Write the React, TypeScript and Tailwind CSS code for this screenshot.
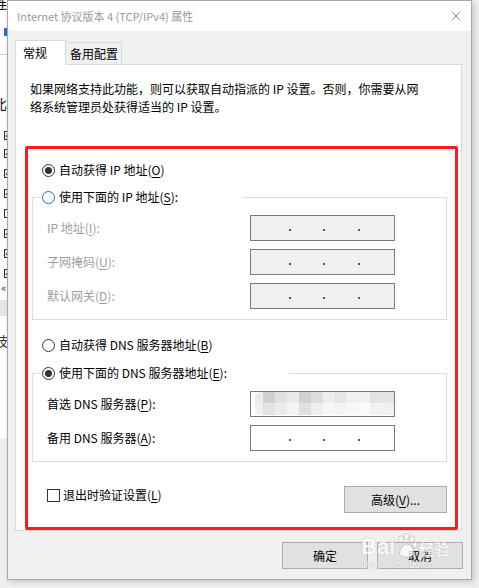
import React from "react";

const U = ({ children }: { children: React.ReactNode }) => (
  <span className="underline decoration-[1px] underline-offset-[2px]">{children}</span>
);

function Radio({ checked = false, focus = false }: { checked?: boolean; focus?: boolean }) {
  return (
    <span
      className={`flex h-[13px] w-[13px] shrink-0 items-center justify-center rounded-full border bg-white ${
        focus ? "border-[#0078d7]" : "border-[#333333]"
      }`}
    >
      {checked && <span className="h-[7px] w-[7px] rounded-full bg-[#333333]" />}
    </span>
  );
}

function Dots() {
  return (
    <div className="flex items-center pl-[38px] pt-[3px]">
      <span className="h-[2px] w-[2px] bg-[#55556a]" />
      <span className="ml-[32px] h-[2px] w-[2px] bg-[#55556a]" />
      <span className="ml-[33px] h-[2px] w-[2px] bg-[#55556a]" />
    </div>
  );
}

function IpBox({ disabled = false, children }: { disabled?: boolean; children?: React.ReactNode }) {
  return (
    <div
      className={`flex h-[26px] w-[145px] items-center overflow-hidden border border-[#7a7a7a] ${
        disabled ? "bg-[#f0f0f0]" : "bg-white"
      }`}
    >
      {children ?? <Dots />}
    </div>
  );
}

function Mosaic() {
  return (
    <div className="flex h-full w-full flex-col pl-[4px]">
      <div className="flex h-[11px]">
        <span className="w-[8px] rounded-tl-[6px] bg-[#ececec]" />
        <span className="w-[12px] bg-[#d0d0d0]" />
        <span className="w-[12px] bg-[#e0e0e0]" />
        <span className="w-[12px] bg-[#ece9e6]" />
        <span className="w-[12px] bg-[#d1d1d1]" />
        <span className="w-[12px] bg-[#dcdde0]" />
        <span className="w-[12px] bg-[#eeeeee]" />
        <span className="w-[12px] bg-[#e6e6e6]" />
        <span className="w-[12px] bg-[#f0f0f0]" />
        <span className="w-[12px] bg-[#f1f1f1]" />
        <span className="w-[12px] bg-[#e3e3e3]" />
        <span className="w-[12px] bg-[#e5e5e5]" />
      </div>
      <div className="flex h-[12px]">
        <span className="w-[8px] rounded-bl-[6px] bg-[#f0f0f0]" />
        <span className="w-[12px] bg-[#e3e3e3]" />
        <span className="w-[12px] bg-[#ebebeb]" />
        <span className="w-[12px] bg-[#f4f4f0]" />
        <span className="w-[12px] bg-[#dfe0e2]" />
        <span className="w-[12px] bg-[#edeeee]" />
        <span className="w-[12px] bg-[#f6f7f9]" />
        <span className="w-[12px] bg-[#f5f5f5]" />
        <span className="w-[12px] bg-[#faf7f7]" />
        <span className="w-[12px] bg-[#f8fafb]" />
        <span className="w-[12px] bg-[#f3f3f1]" />
        <span className="w-[12px] bg-[#f0f0f0]" />
      </div>
    </div>
  );
}

function StripCheck({ checked = true, mt }: { checked?: boolean; mt: string }) {
  return (
    <div className={`${mt} ml-[4px] h-[9px] w-[9px] shrink-0 border border-[#333333] bg-white`}>
      {checked && (
        <svg width="7" height="7" viewBox="0 0 7 7">
          <path d="M1 3.5 L3 5.5 L6.5 1" stroke="#222" strokeWidth="1.2" fill="none" />
        </svg>
      )}
    </div>
  );
}

function LeftStrip() {
  return (
    <div className="flex h-full w-[7px] shrink-0 flex-col overflow-hidden bg-white text-[13px] leading-none text-black">
      <div className="-mt-[4px] -ml-[6px] h-[14px]">连</div>
      <div className="mt-[18px] ml-[4px] h-[8px] w-[3px] shrink-0 bg-[#2a6fc9]" />
      <div className="mt-[18px] h-px w-full shrink-0 bg-[#cfcfcf]" />
      <div className="mt-[42px] -ml-[6px] h-[14px] shrink-0">比</div>
      <StripCheck mt="mt-[20px]" />
      <StripCheck mt="mt-[9px]" />
      <StripCheck mt="mt-[11px]" />
      <StripCheck mt="mt-[11px]" />
      <StripCheck mt="mt-[11px]" checked={false} />
      <StripCheck mt="mt-[11px]" />
      <StripCheck mt="mt-[11px]" />
      <StripCheck mt="mt-[11px]" />
      <div className="mt-[4px] ml-[1px] h-[12px] shrink-0 text-[11px] text-[#333]">«</div>
      <div className="mt-[6px] h-[16px] w-full shrink-0 bg-[#e6e6e6]" />
      <div className="mt-[18px] -ml-[5px] h-[14px] shrink-0 text-[#333]">技</div>
      <div className="mt-[90px] w-full flex-1 bg-[#efefef]" />
    </div>
  );
}

export default function App() {
  return (
    <div className="relative flex h-[588px] w-[479px] overflow-hidden bg-[#f0f0f0] font-['Noto_Sans_CJK_SC','Noto_Sans',sans-serif] text-[12px] leading-[18px] text-black">
      <LeftStrip />

      {/* Dialog */}
      <div className="flex h-[580px] w-[465px] shrink-0 flex-col border border-[#a8a8a8] bg-[#f0f0f0] shadow-[2px_2px_6px_rgba(0,0,0,0.18)]">
        {/* Title bar */}
        <div className="flex h-[30px] shrink-0 items-center justify-between bg-white pl-[9px] pr-[10px]">
          <span className="text-[11px] text-[#999999]">Internet 协议版本 4 (TCP/IPv4) 属性</span>
          <svg width="10" height="10" viewBox="0 0 10 10" className="mt-[-1px]">
            <path d="M0.5 0.5 L9.5 9.5 M9.5 0.5 L0.5 9.5" stroke="#8e8e8e" strokeWidth="1" />
          </svg>
        </div>

        {/* Body */}
        <div className="flex flex-1 flex-col pl-[7px] pt-[9px]">
          {/* Tabs */}
          <div className="flex h-[24px] items-end">
            <div className="relative z-10 -mb-px flex h-[25px] w-[51px] items-start border-x border-t border-[#d9d9d9] bg-white pl-[7px] pt-[3px]">
              常规
            </div>
            <div className="flex h-[22px] w-[56px] items-start border-t border-r border-[#d9d9d9] bg-[#f0f0f0] pl-[4px] pt-[2px]">
              备用配置
            </div>
          </div>

          {/* Panel */}
          <div className="flex h-[467px] w-[447px] flex-col border border-[#d9d9d9] bg-white">
            <p className="ml-[14px] mt-[15px]">
              如果网络支持此功能，则可以获取自动指派的 IP 设置。否则，你需要从网
              <br />
              络系统管理员处获得适当的 IP 设置。
            </p>

            <div className="ml-[26px] mt-[45px] flex h-[18px] items-center gap-[4px]">
              <Radio checked />
              <span>
                自动获得 IP 地址(<U>O</U>)
              </span>
            </div>

            {/* Group 1 */}
            <div className="ml-[16px] mt-[18px] flex w-[415px] flex-col border border-[#dcdcdc] pb-[10px]">
              <div className="-mt-[10px] ml-[8px] flex h-[18px] w-[201px] items-center gap-[4px] bg-white pl-[1px]">
                <Radio focus />
                <span>
                  使用下面的 IP 地址(<U>S</U>):
                </span>
              </div>
              <div className="mt-[9px] flex flex-col gap-[8px] text-[#a0a0a0]">
                <div className="flex items-center">
                  <span className="w-[217px] pl-[14px]">
                    IP 地址(<U>I</U>):
                  </span>
                  <IpBox disabled />
                </div>
                <div className="flex items-center">
                  <span className="w-[217px] pl-[14px]">
                    子网掩码(<U>U</U>):
                  </span>
                  <IpBox disabled />
                </div>
                <div className="flex items-center">
                  <span className="w-[217px] pl-[14px]">
                    默认网关(<U>D</U>):
                  </span>
                  <IpBox disabled />
                </div>
              </div>
            </div>

            <div className="ml-[26px] mt-[16px] flex h-[18px] items-center gap-[4px]">
              <Radio />
              <span>
                自动获得 DNS 服务器地址(<U>B</U>)
              </span>
            </div>

            {/* Group 2 */}
            <div className="ml-[16px] mt-[19px] flex w-[415px] flex-col border border-[#dcdcdc] pb-[10px]">
              <div className="-mt-[10px] ml-[8px] flex h-[18px] w-[248px] items-center gap-[4px] bg-white pl-[1px]">
                <Radio checked />
                <span>
                  使用下面的 DNS 服务器地址(<U>E</U>):
                </span>
              </div>
              <div className="mt-[9px] flex flex-col gap-[8px]">
                <div className="flex items-center">
                  <span className="w-[217px] pl-[14px]">
                    首选 DNS 服务器(<U>P</U>):
                  </span>
                  <IpBox>
                    <Mosaic />
                  </IpBox>
                </div>
                <div className="flex items-center">
                  <span className="w-[217px] pl-[14px]">
                    备用 DNS 服务器(<U>A</U>):
                  </span>
                  <IpBox />
                </div>
              </div>
            </div>

            {/* Bottom row */}
            <div className="mt-[24px] flex items-start justify-between pl-[31px] pr-[14px]">
              <div className="flex h-[18px] items-center gap-[3px]">
                <span className="h-[13px] w-[13px] border border-[#333333] bg-white" />
                <span>
                  退出时验证设置(<U>L</U>)
                </span>
              </div>
              <button className="flex h-[27px] w-[103px] items-center justify-center border border-[#adadad] bg-[#e1e1e1]">
                高级(<U>V</U>)...
              </button>
            </div>
          </div>

          {/* Footer buttons */}
          <div className="mt-[11px] flex justify-end gap-[9px] pr-[8px]">
            <button className="flex h-[27px] w-[86px] items-center justify-center border border-[#adadad] bg-[#e1e1e1]">
              确定
            </button>
            <button className="flex h-[27px] w-[86px] items-center justify-center border border-[#adadad] bg-[#e1e1e1]">
              取消
            </button>
          </div>
        </div>
      </div>

      {/* Red annotation box */}
      <div className="pointer-events-none absolute left-[25px] top-[146px] h-[384px] w-[433px] rounded-[2px] border-[3px] border-[#fd1c1c]" />

      {/* Watermark */}
      <div className="pointer-events-none absolute left-[361px] top-[533px] flex flex-col text-white opacity-80 [text-shadow:0_0_1px_#9a9a9a]">
        <div className="flex items-end">
          <span className="font-['Liberation_Sans',sans-serif] text-[22px] font-bold leading-[28px]">Bai</span>
          <svg width="22" height="26" viewBox="0 0 22 26" className="mx-[1px] mb-[2px]">
            <g fill="#ffffff" stroke="#b5b5b5" strokeWidth="0.8">
              <ellipse cx="5" cy="6" rx="2.6" ry="3.2" />
              <ellipse cx="10.5" cy="3.5" rx="2.6" ry="3.2" />
              <ellipse cx="16" cy="6" rx="2.6" ry="3.2" />
              <ellipse cx="19" cy="12" rx="2.3" ry="2.8" />
              <path d="M4 22 C2 18 7 11 11 11 C15 11 19 18 17 22 C15 25 6 25 4 22 Z" />
            </g>
          </svg>
          <span className="mb-[3px] text-[15px] font-bold leading-[18px]">经验</span>
        </div>
        <span className="-mt-[2px] font-['Liberation_Sans',sans-serif] text-[10px] leading-[12px]">jingyan.baidu.com</span>
      </div>
    </div>
  );
}
